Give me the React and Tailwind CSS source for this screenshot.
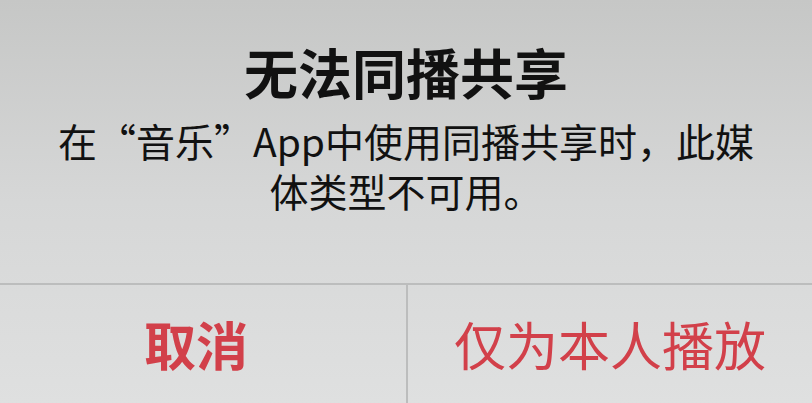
export default function App() {
  const cjk = { fontFamily: '"Noto Sans CJK SC", "Noto Sans", sans-serif' };
  return (
    <div
      className="w-[812px] h-[403px] flex flex-col bg-gradient-to-b from-[#c6c7c6] via-[#d6d7d7] to-[#dfe0e0] overflow-hidden"
      style={cjk}
    >
      {/* alert body */}
      <div className="h-[283px] flex flex-col items-center pt-[40px] px-[40px] text-center text-[#111]">
        <h1 className="text-[54px] leading-[64px] font-bold">无法同播共享</h1>
        <p className="mt-[11px] text-[39px] leading-[50px]">
          在“音乐”App中使用同播共享时，此媒体类型不可用。
        </p>
      </div>
      {/* action buttons */}
      <div className="flex-1 grid grid-cols-2 border-t-2 border-[#bcbdbd]">
        <button className="flex items-center justify-center pr-[14px] text-[52px] font-bold text-[#d2404a]">
          取消
        </button>
        <button className="flex items-center justify-center border-l-2 border-[#bcbdbd] text-[52px] text-[#d2404a]">
          仅为本人播放
        </button>
      </div>
    </div>
  );
}
